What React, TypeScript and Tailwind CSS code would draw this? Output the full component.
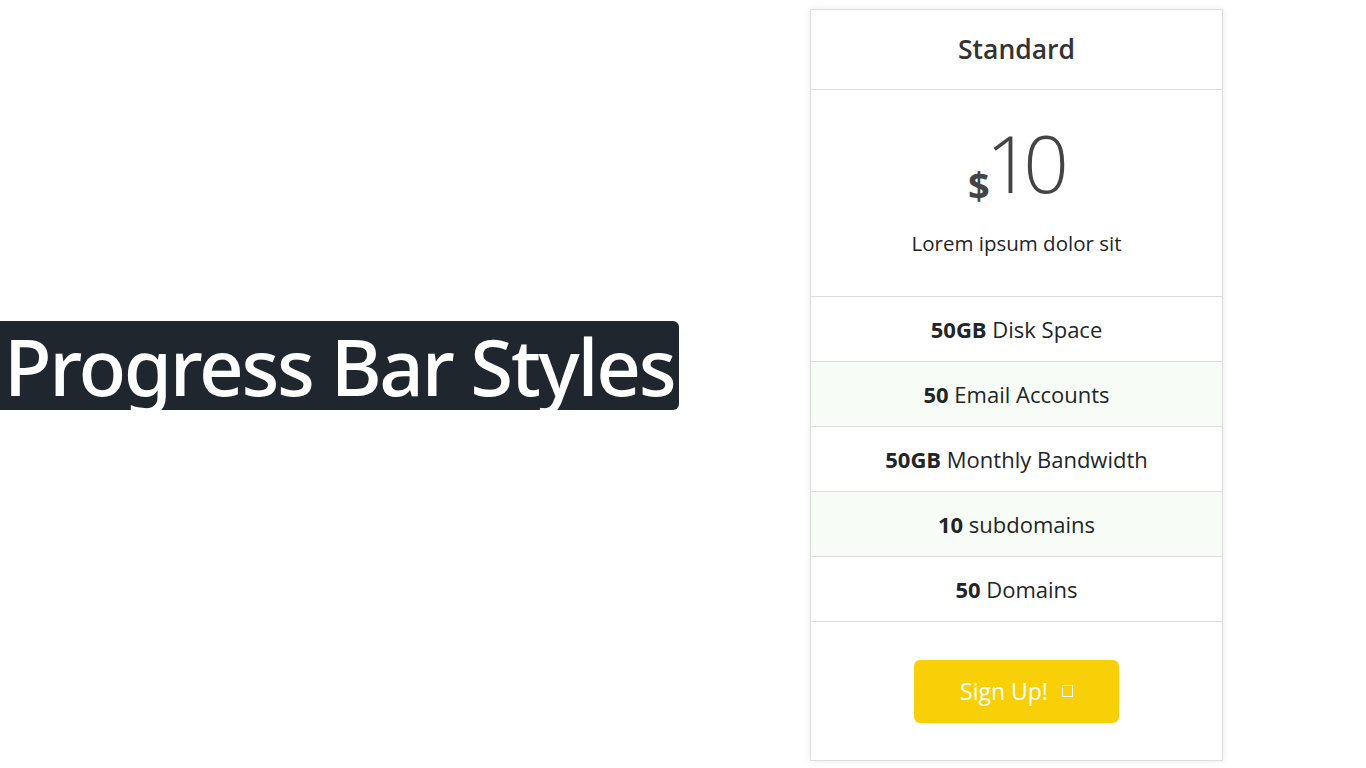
import React from 'react';

const features = [
  { bold: '50GB', text: 'Disk Space' },
  { bold: '50', text: 'Email Accounts' },
  { bold: '50GB', text: 'Monthly Bandwidth' },
  { bold: '10', text: 'subdomains' },
  { bold: '50', text: 'Domains' },
];

const App: React.FC = () => {
  return (
    <div className="w-[1366px] h-[768px] bg-white flex items-start overflow-hidden font-['Open_Sans',sans-serif]">
      {/* title banner */}
      <div className="mt-[321px] w-[679px] h-[89px] bg-[#1f262e] rounded-r-md flex items-center pl-[4px]">
        <span className="text-white text-[78px] leading-none tracking-[-2.3px] font-medium font-['Noto_Sans',sans-serif] whitespace-nowrap">
          Progress Bar Styles
        </span>
      </div>

      {/* pricing card */}
      <div className="ml-[131px] mt-[9px] w-[413px] border border-[#dcdcdc] bg-white shadow-[0_0_8px_rgba(0,0,0,0.08)] text-[#212529]">
        <div className="h-[80px] flex items-center justify-center border-b border-[#dcdcdc]">
          <h2 className="text-[26.5px] font-semibold text-[#333]">Standard</h2>
        </div>

        <div className="h-[207px] flex flex-col items-center border-b border-[#dcdcdc]">
          <div className="mt-[32px] flex items-end text-[#444] pr-[4px]">
            <span className="text-[38px] font-bold leading-none mb-[-2px] tracking-[-4px]">$</span>
            <span className="text-[80px] font-light leading-none tracking-[-8px]">10</span>
          </div>
          <p className="mt-[26px] text-[20.5px]">Lorem ipsum dolor sit</p>
        </div>

        {features.map((f, i) => (
          <div
            key={f.text}
            className={`h-[65px] flex items-center justify-center border-b border-[#dcdcdc] text-[22px] ${
              i % 2 === 1 ? 'bg-[#f7fdf6]' : 'bg-white'
            }`}
          >
            <span>
              <b className="font-bold">{f.bold}</b> {f.text}
            </span>
          </div>
        ))}

        <div className="h-[138px] flex items-center justify-center">
          <button className="w-[205px] h-[63px] rounded-md bg-[#f9cf07] text-white text-[23px] flex items-center justify-center gap-[14px]">
            Sign Up!
            <span className="inline-block w-[11px] h-[12px] border border-white" />
          </button>
        </div>
      </div>
    </div>
  );
};

export default App;
